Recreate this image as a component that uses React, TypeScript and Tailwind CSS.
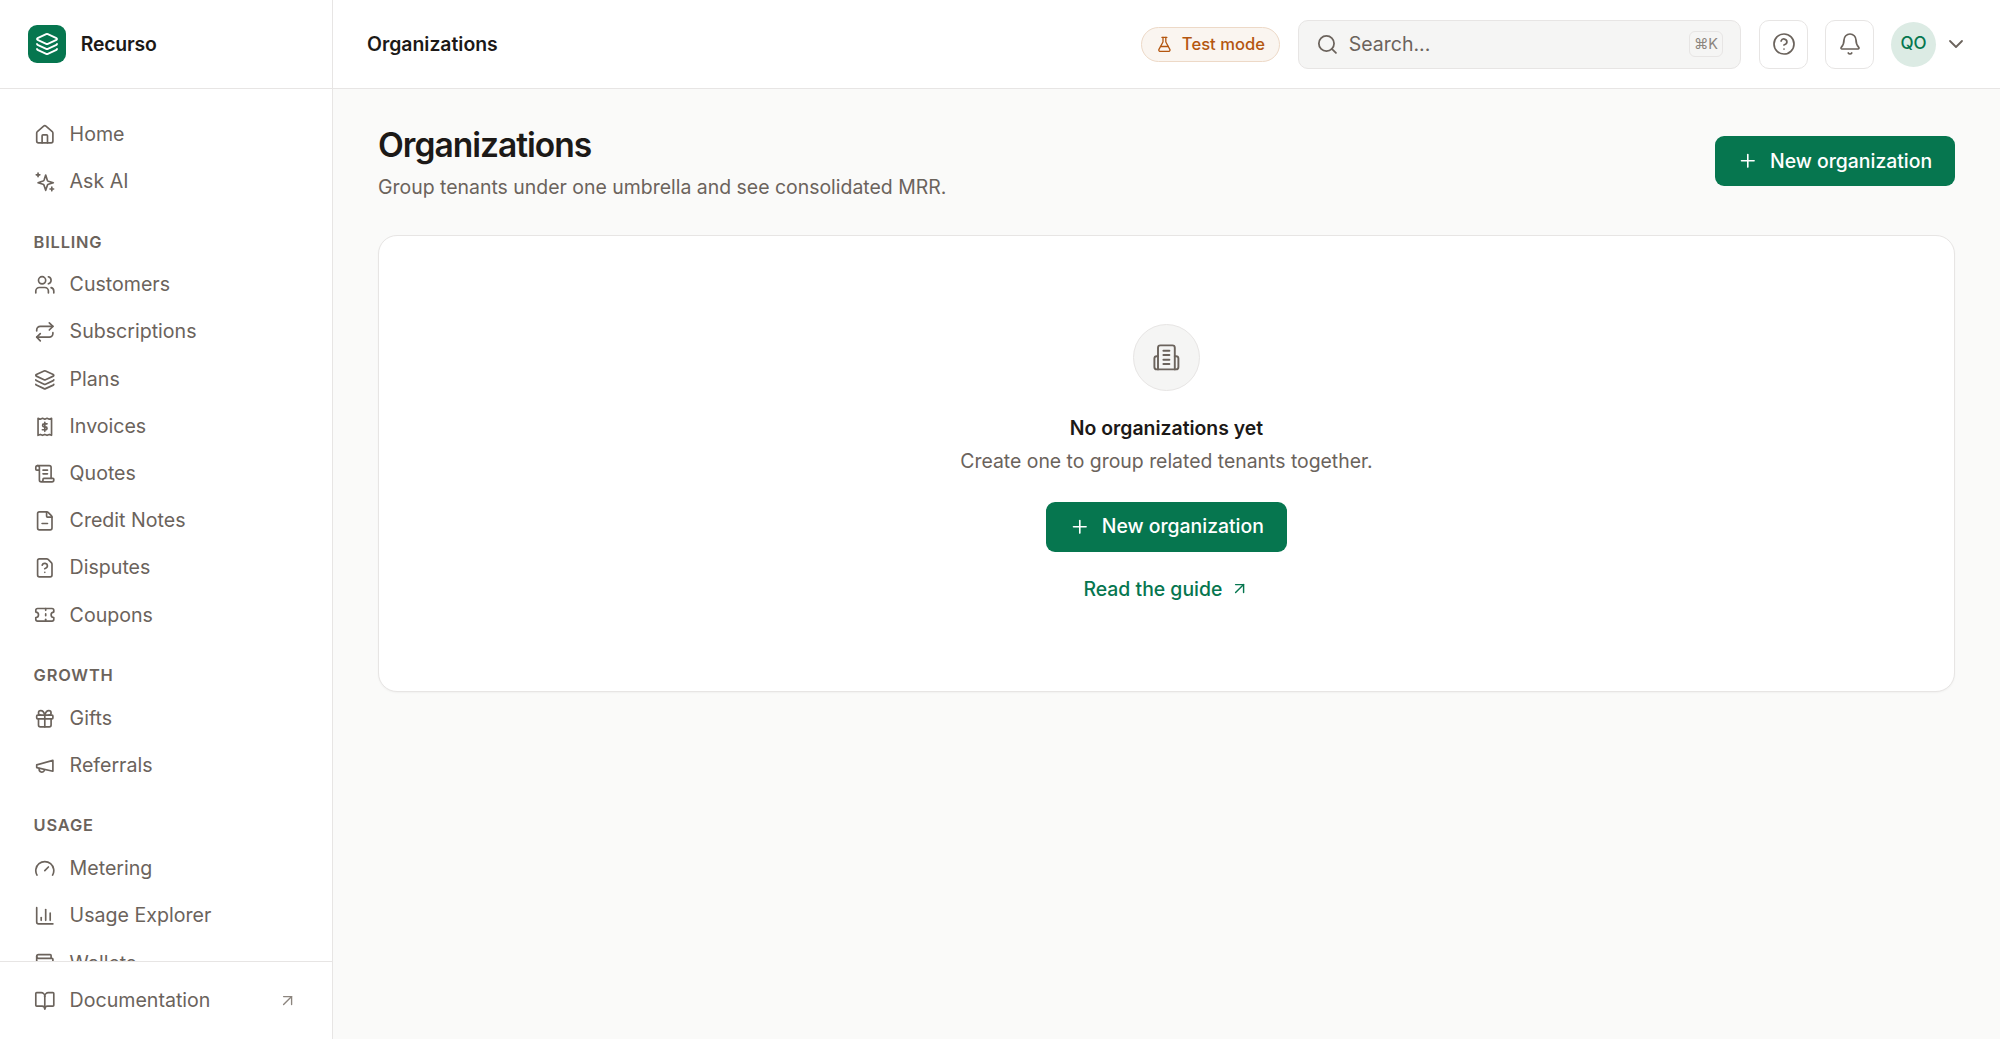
import {
  ArrowUpRight,
  Bell,
  BookOpen,
  ChartColumn,
  ChevronDown,
  CircleHelp,
  FileMinus,
  FileQuestion,
  FlaskConical,
  Gauge,
  Gift,
  Home,
  Layers,
  Plus,
  Repeat,
  ScrollText,
  Search,
  Ticket,
  Users,
  Wallet,
} from "lucide-react";
import type { ComponentType, SVGProps } from "react";

type IconProps = SVGProps<SVGSVGElement> & { size?: number; strokeWidth?: number };
type IconType = ComponentType<IconProps>;

function Svg({ size = 24, strokeWidth = 2, children, ...rest }: IconProps) {
  return (
    <svg width={size} height={size} viewBox="0 0 24 24" fill="none" stroke="currentColor" strokeWidth={strokeWidth} strokeLinecap="round" strokeLinejoin="round" {...rest}>
      {children}
    </svg>
  );
}

function SparklesIcon(props: IconProps) {
  return (
    <Svg {...props}>
      <path d="M13 4.500L14.800 10.200a2 2 0 0 0 1.200 1.200L21.500 13L16 14.800a2 2 0 0 0-1.200 1.200L13 21.500L11.200 16a2 2 0 0 0-1.200-1.200L4.500 13L10 11.200a2 2 0 0 0 1.200-1.200z" />
      <path d="M4.500 2.300v4M2.500 4.300h4M19.800 18v4M17.800 20h4" />
    </Svg>
  );
}

function InvoiceIcon(props: IconProps) {
  return (
    <Svg {...props}>
      <path d="M4.500 2.500l2.500 1 2.500-1 2.500 1 2.500-1 2.500 1 2.500-1v19l-2.500-1-2.500 1-2.500-1-2.500 1-2.500-1-2.500 1z" />
      <path d="M12 7v10M14.500 8.700h-3.300a1.600 1.600 0 0 0 0 3.300h1.600a1.600 1.600 0 0 1 0 3.300H9.300" />
    </Svg>
  );
}

function MegaphoneIcon(props: IconProps) {
  return (
    <Svg {...props}>
      <path d="m3 11 18-5v12L3 14v-3z" />
      <path d="M11.600 16.800a3 3 0 1 1-5.800-1.600" />
    </Svg>
  );
}

function TowerIcon(props: IconProps) {
  return (
    <Svg {...props}>
      <path d="M5 22V4a2 2 0 0 1 2-2h10a2 2 0 0 1 2 2v18z" />
      <path d="M5 11H4a2 2 0 0 0-2 2v7a2 2 0 0 0 2 2h1" />
      <path d="M19 11h1a2 2 0 0 1 2 2v7a2 2 0 0 1-2 2h-1" />
      <path d="M9.500 6.500h5M9.500 10h5M9.500 14h5M9.500 17.500h5" />
    </Svg>
  );
}

const groups: { label?: string; items: { name: string; icon: IconType }[] }[] = [
  {
    items: [
      { name: "Home", icon: Home },
      { name: "Ask AI", icon: SparklesIcon },
    ],
  },
  {
    label: "Billing",
    items: [
      { name: "Customers", icon: Users },
      { name: "Subscriptions", icon: Repeat },
      { name: "Plans", icon: Layers },
      { name: "Invoices", icon: InvoiceIcon },
      { name: "Quotes", icon: ScrollText },
      { name: "Credit Notes", icon: FileMinus },
      { name: "Disputes", icon: FileQuestion },
      { name: "Coupons", icon: Ticket },
    ],
  },
  {
    label: "Growth",
    items: [
      { name: "Gifts", icon: Gift },
      { name: "Referrals", icon: MegaphoneIcon },
    ],
  },
  {
    label: "Usage",
    items: [
      { name: "Metering", icon: Gauge },
      { name: "Usage Explorer", icon: ChartColumn },
      { name: "Wallets", icon: Wallet },
    ],
  },
];

function NewOrgButton() {
  return (
    <button className="flex h-[50px] w-[240.5px] items-center justify-center gap-[11px] rounded-[9px] bg-[#06764f] text-[19.4px] font-medium text-white">
      <Plus size={21.6} strokeWidth={1.8} />
      <span className="pt-[1px]">New organization</span>
    </button>
  );
}

export default function App() {
  return (
    <div className="flex h-screen overflow-hidden bg-[#fafaf9] font-['Inter',sans-serif] text-[#1c1917]">
      <aside className="flex h-full w-[333px] shrink-0 flex-col border-r border-[#e7e5e4] bg-white">
        <div className="flex h-[89px] shrink-0 items-center gap-[14.4px] border-b border-[#e7e5e4] pl-[28px]">
          <div className="flex h-[38.4px] w-[38.4px] items-center justify-center rounded-[9px] bg-[#06764f] text-white">
            <Layers size={24} strokeWidth={1.8} />
          </div>
          <span className="pt-[2px] text-[19.4px] font-semibold tracking-[-0.01em]">Recurso</span>
        </div>
        <nav className="min-h-0 flex-1 overflow-hidden pt-[22px]">
          {groups.map((group) => (
            <div key={group.label ?? "top"} className="mb-[19px]">
              {group.label && (
                <div className="flex h-[37px] items-center pb-[2px] pl-[33.6px] text-[16.4px] font-semibold uppercase tracking-[0.05em] text-[#6b635c]">
                  {group.label}
                </div>
              )}
              {group.items.map((item) => (
                <a key={item.name} className="flex h-[47.2px] items-center gap-[14.4px] pl-[33.6px] text-[19.6px] font-normal text-[#6b635c]">
                  <item.icon size={21.6} strokeWidth={1.85} />
                  {item.name}
                </a>
              ))}
            </div>
          ))}
        </nav>
        <div className="flex h-[78px] shrink-0 items-center border-t border-[#e7e5e4] pl-[33.6px] pr-[35px] text-[19.6px] text-[#6b635c]">
          <BookOpen size={21.6} strokeWidth={1.85} />
          <span className="ml-[14.4px] flex-1 pt-[1px]">Documentation</span>
          <ArrowUpRight size={19.2} strokeWidth={1.7} className="text-[#8c857e]" />
        </div>
      </aside>
      <div className="flex min-w-0 flex-1 flex-col">
        <header className="flex h-[89px] shrink-0 items-center border-b border-[#e7e5e4] bg-white pl-[34px] pr-[32px]">
          <h2 className="flex-1 pt-[1px] text-[19.4px] font-semibold">Organizations</h2>
          <div className="flex h-[35px] w-[139px] items-center justify-center gap-[9px] rounded-full border border-[#edd9c7] bg-[#faf5f0] text-[16.6px] font-medium text-[#b4560f]">
            <FlaskConical size={16.8} strokeWidth={1.85} />
            Test mode
          </div>
          <div className="ml-[18px] flex h-[49px] w-[443px] items-center rounded-[10px] border border-[#e7e5e4] bg-[#f5f5f4] pl-[17px] pr-[17px] text-[19.5px] text-[#6b635c]">
            <Search size={22.8} strokeWidth={1.85} />
            <span className="ml-[10px] flex-1 pt-[1px]">Search...</span>
            <span className="flex h-[26px] w-[34px] items-center justify-center rounded-[6px] border border-[#e7e5e4] text-[14.4px] text-[#8c857e]">⌘K</span>
          </div>
          <button className="ml-[18px] flex h-[49px] w-[49px] items-center justify-center rounded-[10px] border border-[#e7e5e4] bg-white text-[#6b635c]">
            <CircleHelp size={24} strokeWidth={1.7} />
          </button>
          <button className="ml-[17px] flex h-[49px] w-[49px] items-center justify-center rounded-[10px] border border-[#e7e5e4] bg-white text-[#6b635c]">
            <Bell size={24} strokeWidth={1.7} />
          </button>
          <div className="ml-[17px] flex h-[45px] w-[45px] items-center justify-center rounded-full bg-[#dcebe4] text-[17px] font-medium text-[#06764f]">QO</div>
          <ChevronDown size={24} strokeWidth={1.8} className="ml-[8px] text-[#6b635c]" />
        </header>
        <main className="flex-1 px-[45px] pt-[33.500px]">
          <div className="flex items-start justify-between">
            <div>
              <h1 className="text-[33.6px] leading-[44px] font-semibold tracking-[-0.03em]">Organizations</h1>
              <p className="mt-[6px] text-[19.44px] leading-[28px] text-[#6b635c]">Group tenants under one umbrella and see consolidated MRR.</p>
            </div>
            <div className="mt-[13.500px]">
              <NewOrgButton />
            </div>
          </div>
          <section className="mt-[34px] flex h-[457.500px] flex-col items-center rounded-[19px] border border-[#e7e5e4] bg-white pt-[88px] shadow-[0_1px_2px_rgba(0,0,0,0.04)]">
            <div className="flex h-[67px] w-[67px] items-center justify-center rounded-full border border-[#e7e5e4] bg-[#f5f5f4] text-[#6b635c]">
              <TowerIcon size={28.8} strokeWidth={1.6} />
            </div>
            <h3 className="mt-[23px] text-[19.4px] leading-[28px] font-semibold">No organizations yet</h3>
            <p className="mt-[5px] text-[19.4px] leading-[28px] text-[#6b635c]">Create one to group related tenants together.</p>
            <div className="mt-[27px]">
              <NewOrgButton />
            </div>
            <a className="mt-[23px] flex items-center gap-[8px] text-[19.4px] leading-[28px] font-medium text-[#06764f]">
              Read the guide
              <ArrowUpRight size={19.2} strokeWidth={1.8} />
            </a>
          </section>
        </main>
      </div>
    </div>
  );
}
